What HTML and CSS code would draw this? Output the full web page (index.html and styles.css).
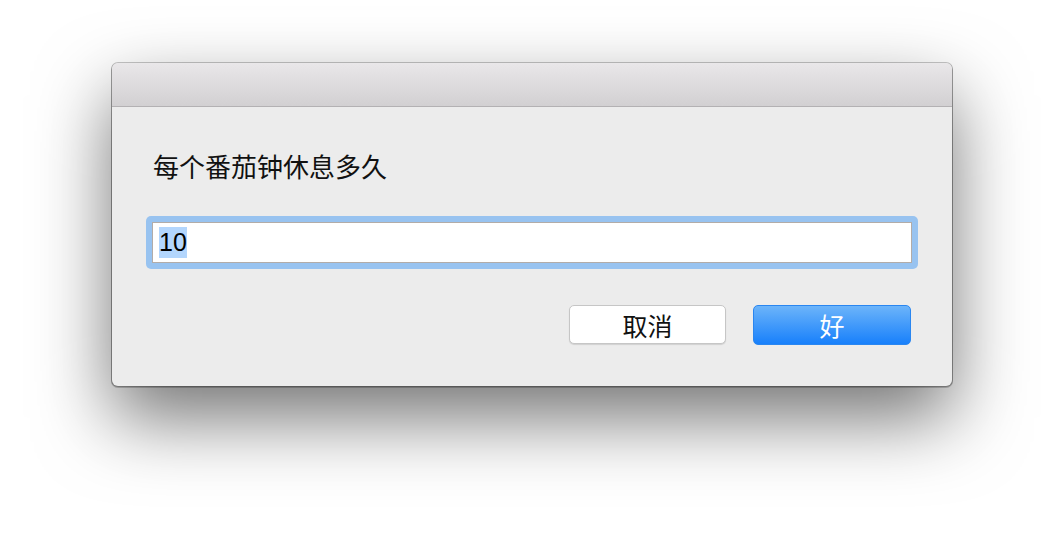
FILE: index.html
```html
<!DOCTYPE html>
<html lang="zh-CN">
<head>
<meta charset="utf-8">
<link rel="stylesheet" href="styles.css">
</head>
<body>
<div class="window">
  <div class="titlebar"></div>
  <div class="content">
    <div class="label">每个番茄钟休息多久</div>
    <div class="field-ring">
      <div class="field"><span class="sel">10</span></div>
    </div>
    <div class="buttons">
      <div class="btn cancel">取消</div>
      <div class="btn ok">好</div>
    </div>
  </div>
</div>
</body>
</html>
```

FILE: styles.css
```css
html, body {
  margin: 0;
  padding: 0;
  background: #ffffff;
}
body {
  width: 1064px;
  height: 546px;
  overflow: hidden;
  font-family: "Noto Sans CJK SC", "Noto Sans", sans-serif;
}
.window {
  margin: 63px 0 0 112px;
  width: 840px;
  height: 323px;
  border-radius: 6px;
  background: #ececec;
  box-shadow: 0 0 0 1px rgba(0,0,0,0.22), 0 1px 0 1px rgba(0,0,0,0.2), 0 32px 75px rgba(0,0,0,0.55);
  overflow: hidden;
  display: flex;
  flex-direction: column;
}
.titlebar {
  height: 43px;
  flex: none;
  background: linear-gradient(#e9e7e9, #d2d0d2);
  border-bottom: 1px solid #b3b1b3;
}
.content {
  flex: 1;
  padding: 43px 34px 0 34px;
  display: flex;
  flex-direction: column;
}
.label {
  padding-left: 7px;
  font-size: 26px;
  line-height: 32px;
  letter-spacing: 0;
  color: #111;
}
.field-ring {
  margin-top: 34px;
  height: 41px;
  padding: 6px;
  border-radius: 5px;
  background: #98c3f0;
  box-sizing: content-box;
}
.field {
  height: 41px;
  box-sizing: border-box;
  background: #fff;
  border: 1px solid #b2aca8;
  display: flex;
  align-items: center;
  padding-left: 6px;
}
.sel {
  background: #b3d6fd;
  font-family: "Liberation Sans", "Noto Sans", sans-serif;
  font-size: 25px;
  line-height: 31px;
  color: #000;
}
.buttons {
  margin-top: 36px;
  display: flex;
  justify-content: flex-end;
  gap: 27px;
  padding-right: 7px;
}
.btn {
  width: 157px;
  height: 39px;
  box-sizing: border-box;
  border-radius: 5px;
  display: flex;
  align-items: center;
  justify-content: center;
  font-size: 25px;
}
.cancel {
  background: #fff;
  border: 1px solid #c6c6c6;
  box-shadow: 0 1px 1px rgba(0,0,0,0.12);
  color: #111;
}
.ok {
  width: 158px;
  height: 40px;
  background: linear-gradient(#6cb4fa, #1880fb);
  border: 1px solid #2a86f0;
  color: #fff;
}
```
